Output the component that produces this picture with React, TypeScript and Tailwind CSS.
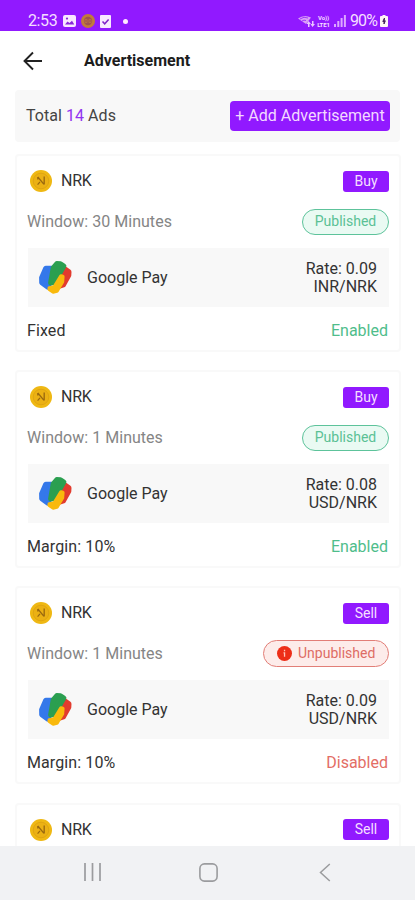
import React from 'react';

interface Ad {
  id: number;
  type: 'Buy' | 'Sell';
  window: string;
  rate: string;
  pair: string;
  pricing: string;
  published: boolean;
}

const ads: Ad[] = [
  { id: 1, type: 'Buy', window: '30 Minutes', rate: '0.09', pair: 'INR/NRK', pricing: 'Fixed', published: true },
  { id: 2, type: 'Buy', window: '1 Minutes', rate: '0.08', pair: 'USD/NRK', pricing: 'Margin: 10%', published: true },
  { id: 3, type: 'Sell', window: '1 Minutes', rate: '0.09', pair: 'USD/NRK', pricing: 'Margin: 10%', published: false },
];

const CoinIcon = () => (
  <svg className="h-[22px] w-[22px]" viewBox="0 0 22 22" fill="none">
    <circle cx="11" cy="11" r="11" fill="#efb813" />
    <circle cx="11" cy="11" r="7.800" fill="#ebb114" stroke="#dda112" strokeWidth="0.800" />
    <path d="M7.800 7v2.400M7.800 7l6.200 7.400M14.200 6.600v8" stroke="#99680f" strokeWidth="1.300" />
    <path d="M10 11.800l-2.400 2.900" stroke="#99680f" strokeWidth="1.200" />
  </svg>
);

const GooglePayIcon = () => (
  <svg className="h-[33px] w-[33px]" viewBox="0 0 33 33" strokeLinejoin="round">
    <path d="M24 6.500l6 4.300-.2 3.500-5.400 9.700-3 1z" fill="#e23b2e" stroke="#e23b2e" strokeWidth="5" />
    <path d="M6.700 7.300h5.600L10 24l-1.500 2-5.800-4.200-.1-5z" fill="#3478ea" stroke="#3478ea" strokeWidth="5" />
    <path d="M14.200 6.800l3.600-4.200 3.700.1 3.400 2.300-9.400 16.500-3.900.5z" fill="#2b9f50" stroke="#2b9f50" strokeWidth="5" />
    <path d="M22 15l1.800.4-.4 5.400-5.500 9.200-3.900.9-3.700-2.600v-1.200l5-1.200z" fill="#f9b90c" stroke="#f9b90c" strokeWidth="3.600" />
  </svg>
);

const StatusBar = () => (
  <div className="flex h-[31px] shrink-0 items-end justify-between bg-[#9119ff] pl-[28px] pr-[27px] text-[#f5deff]">
    <div className="flex h-[20px] items-center">
      <span className="w-[30px] text-[16px] leading-[20px] tracking-[-0.400px]">2:53</span>
      <svg className="ml-[5px] h-3 w-[13px]" viewBox="0 0 13 12">
        <rect width="13" height="12" rx="2" fill="#f8e8ff" />
        <path d="M2 9.500l2.500-3 2 1.600L9 5.800l2.300 3.700z" fill="#8a27d8" />
        <circle cx="4" cy="3.600" r="1.100" fill="#8a27d8" />
      </svg>
      <svg className="ml-[5px] h-[14px] w-[14px]" viewBox="0 0 14 14" fill="none">
        <circle cx="7" cy="7" r="7" fill="#c27b3b" />
        <circle cx="7" cy="7" r="4.200" fill="#a0524f" />
        <path d="M4 5.400h2v3.200H4zM8 5.400h2v3.200H8z" stroke="#bb7544" strokeWidth="0.900" />
      </svg>
      <svg className="ml-[5px] h-[13px] w-[11px]" viewBox="0 0 11 13" fill="none">
        <rect width="11" height="13" rx="1" fill="#f8e8ff" />
        <path d="M2.500 6.500l2.200 2.300 3.900-4.400" stroke="#8023c8" strokeWidth="1.500" />
      </svg>
      <span className="ml-[12px] h-[5px] w-[5px] rounded-full bg-[#ffeaff]" />
    </div>
    <div className="flex h-[20px] items-center">
      <svg className="h-3 w-[17px]" viewBox="0 0 17 12" fill="none">
        <path d="M0 3.500Q6-1 13 2.500L8 9z" fill="#d9a0f5" />
        <path d="M2 4q4-3 8-1M4 6q2-1.500 4-.5" stroke="#9119ff" strokeWidth="0.800" />
        <path d="M10.500 6l-2 3h1.500v3h1.500V9H13zM14.500 12l-2-3H14V6h1.500v3H17z" fill="#eac5ff" />
      </svg>
      <div className="ml-[1px] flex w-[15px] flex-col text-center text-[6px] font-bold leading-[7px] tracking-[-0.100px]">
        <span>Vo))</span>
        <span>LTE1</span>
      </div>
      <svg className="ml-[3px] h-3 w-[12px]" viewBox="0 0 12 12" fill="#dda7ff">
        <rect x="0" y="9" width="2" height="3" />
        <rect x="3.300" y="6" width="2" height="6" />
        <rect x="6.600" y="3" width="2" height="9" />
        <rect x="9.900" y="0" width="2" height="12" />
      </svg>
      <span className="ml-[4px] w-[30px] text-[16px] leading-[20px] tracking-[-0.900px]">90%</span>
      <svg className="h-[12px] w-[8px]" viewBox="0 0 8 12">
        <path d="M2.500 0h3v1H7a1 1 0 0 1 1 1v9a1 1 0 0 1-1 1H1a1 1 0 0 1-1-1V2a1 1 0 0 1 1-1h1.500z" fill="#fff4f5" />
        <path d="M4.500 3L2.800 6.500H4V9l1.300-3.200H4.200z" fill="#47225c" stroke="#47225c" />
      </svg>
    </div>
  </div>
);

const StatusPill = ({ published }: { published: boolean }) => {
  if (published) {
    return (
      <span className="flex h-[26px] w-[87px] items-center justify-center rounded-full border border-[#5dc39b] bg-[#eafaf3] text-[14px] text-[#5bc195]">
        Published
      </span>
    );
  }

  return (
    <span className="flex h-[27px] w-[126px] items-center rounded-full border border-[#e27e77] bg-[#fdecea] pl-[13px] text-[14px] text-[#de6d65]">
      <svg className="mr-[6px] h-[15px] w-[15px]" viewBox="0 0 15 15">
        <circle cx="7.500" cy="7.500" r="7.500" fill="#ed2e18" />
        <path d="M6.900 3.800h1.300v1.400H6.900zM6.500 6.300h1.700v4.400H6.900V7.400h-.4z" fill="#ffc5bb" />
      </svg>
      Unpublished
    </span>
  );
};

const CardHeader = ({ type }: { type: Ad['type'] }) => (
  <div className="flex h-[22px] items-center justify-between">
    <div className="flex items-center gap-[9px] pl-[3px]">
      <CoinIcon />
      <span className="tracking-[-0.200px]">NRK</span>
    </div>
    <span className="flex h-[21px] w-[46px] items-center justify-center rounded-[3px] bg-[#9119ff] text-[14px] text-[#f5dfff]">
      {type}
    </span>
  </div>
);

const AdCard = ({ ad }: { ad: Ad }) => (
  <div className="h-[198px] shrink-0 rounded-[4px] border-2 border-[#f9f9f9] bg-white pl-[10px] pr-[10px] pt-[14px]">
    <CardHeader type={ad.type} />

    <div className="mt-[16px] flex h-[27px] items-center justify-between">
      <span className="tracking-[0.030px] text-[#858585]">Window: {ad.window}</span>
      <StatusPill published={ad.published} />
    </div>

    <div className="ml-[1px] mt-[13px] flex h-[59px] items-center bg-[#f8f8f8] pl-[11px] pr-[12px]">
      <GooglePayIcon />
      <span className="ml-[15px] flex-1">Google Pay</span>
      <div className="text-right leading-[18px]">
        <div>Rate: {ad.rate}</div>
        <div>{ad.pair}</div>
      </div>
    </div>

    <div className="mt-[13px] flex h-[22px] items-center justify-between pr-[1px]">
      <span className="tracking-[0.100px]">{ad.pricing}</span>
      {ad.published ? (
        <span className="text-[#4fbd8b]">Enabled</span>
      ) : (
        <span className="text-[#e36d65]">Disabled</span>
      )}
    </div>
  </div>
);

const NavigationBar = () => (
  <div className="flex h-[54px] shrink-0 items-center bg-[#f1f2f4] pl-[83px] text-[#9b9c9e]">
    <svg className="mb-[2px] h-[18px] w-[19px]" viewBox="0 0 19 18" stroke="currentColor" strokeWidth="1.700">
      <path d="M2 0v18M9.500 0v18M17 0v18" />
    </svg>
    <svg className="mb-[2px] ml-[97px] h-[19px] w-[19px]" viewBox="0 0 19 19" fill="none" stroke="currentColor" strokeWidth="1.600">
      <rect x="0.900" y="0.900" width="17.200" height="17.200" rx="4.500" />
    </svg>
    <svg className="mb-[2px] ml-[101px] h-[19px] w-[12px]" viewBox="0 0 12 19" fill="none" stroke="currentColor" strokeWidth="1.500">
      <path d="M10.800 1L1.500 9.500l9.300 8.500" />
    </svg>
  </div>
);

const App: React.FC = () => {
  return (
    <div className="flex h-[900px] w-[415px] flex-col overflow-hidden bg-white font-['Roboto',sans-serif] text-[16px] text-[#333333]">
      <StatusBar />

      <header className="flex h-[59px] shrink-0 items-center pl-[23px]">
        <svg className="h-[20px] w-[20px]" viewBox="0 0 20 20" fill="none" stroke="#222222" strokeWidth="1.900">
          <path d="M10 1.500L1.500 10l8.500 8.500M1.500 10H19" />
        </svg>
        <h1 className="ml-[41px] text-[16px] font-bold text-[#1c1c1c]">Advertisement</h1>
      </header>

      <main className="min-h-0 flex-1 overflow-hidden pl-[15px] pr-[14px]">
        <div className="mr-[1px] flex h-[52px] items-center justify-between rounded-[4px] bg-[#f8f8f8] pl-[11px] pr-[10px]">
          <span className="tracking-[0.050px] text-[#444444]">
            Total <span className="text-[#9233f0]">14</span> Ads
          </span>
          <button
            type="button"
            className="h-[30px] w-[160px] whitespace-nowrap rounded-[4px] bg-[#9119ff] text-[16px] text-[#f3d8ff]"
          >
            + Add Advertisement
          </button>
        </div>

        <div className="mt-[12px] flex flex-col gap-[18.200px]">
          {ads.map((ad) => (
            <AdCard key={ad.id} ad={ad} />
          ))}

          {/* Next card, peeking out above the navigation bar */}
          <div className="h-[43px] shrink-0 rounded-t-[4px] border-2 border-b-0 border-[#f9f9f9] px-[10px] pt-[14px]">
            <CardHeader type="Sell" />
          </div>
        </div>
      </main>

      <NavigationBar />
    </div>
  );
};

export default App;
